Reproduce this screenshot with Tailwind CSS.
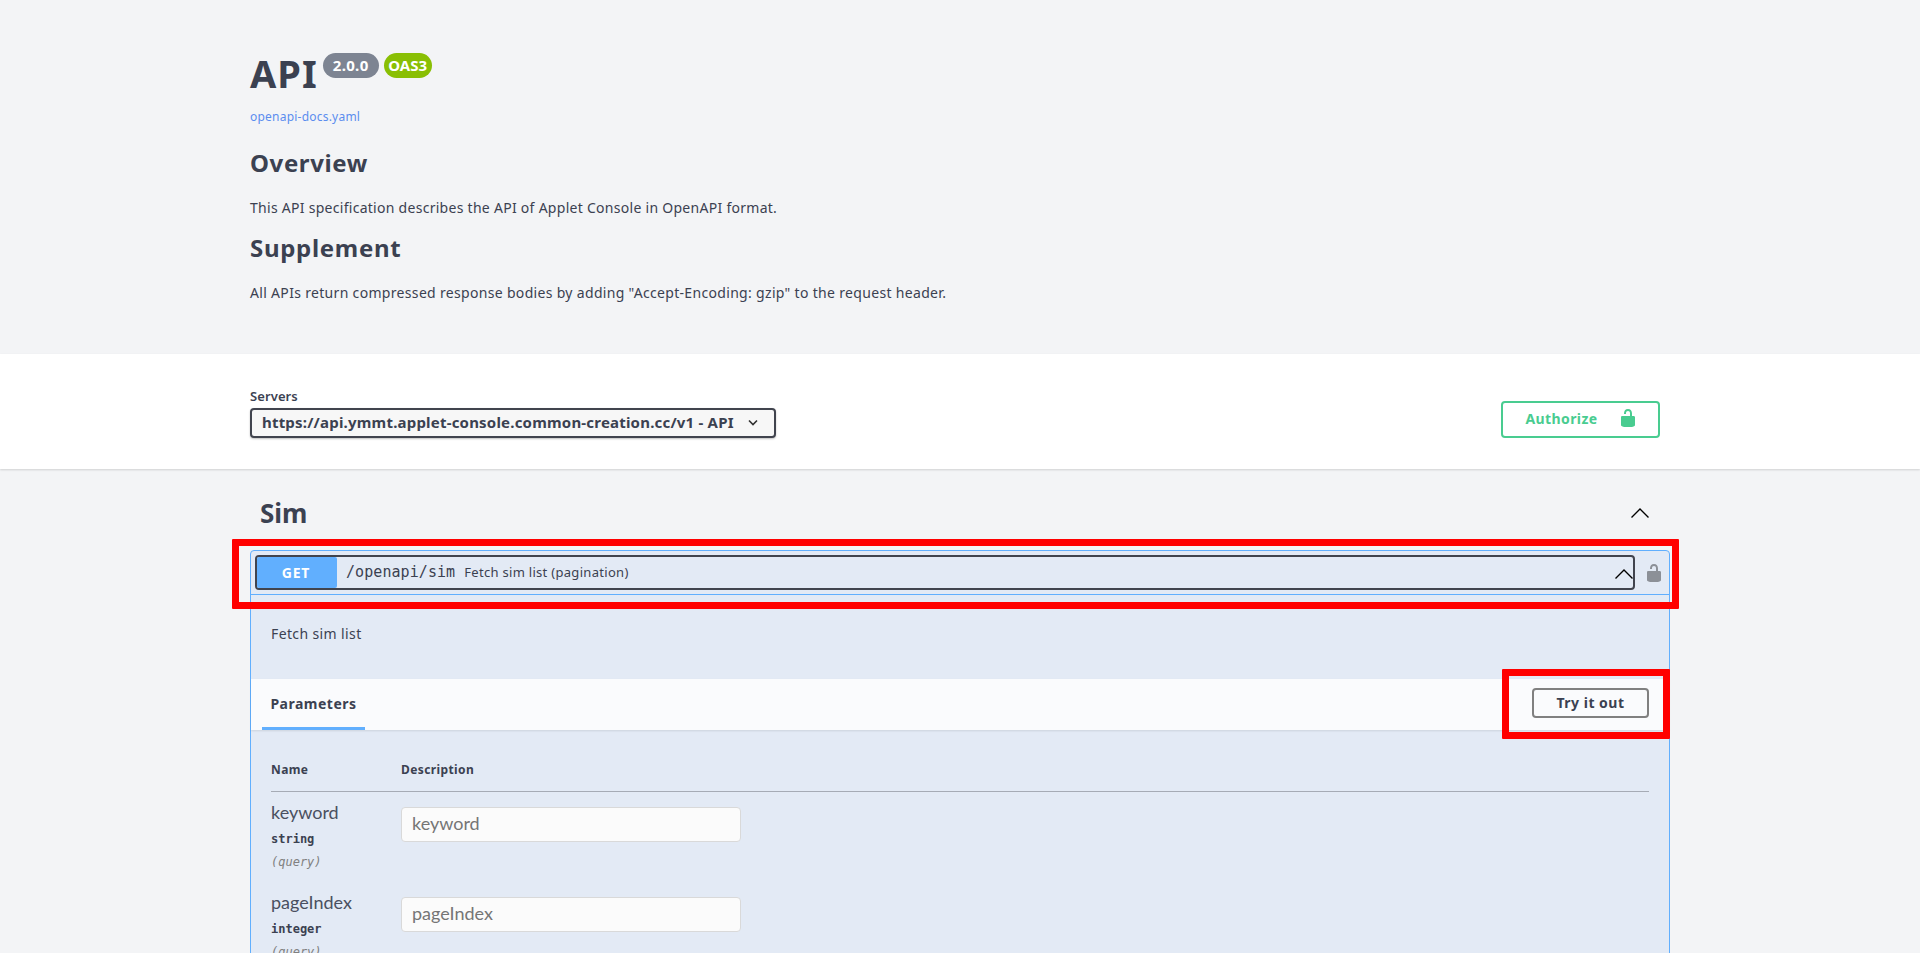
<!DOCTYPE html>
<html><head><meta charset="utf-8"><script src="https://cdn.jsdelivr.net/npm/@tailwindcss/browser@4"></script></head>
<body class="m-0 h-[953px] overflow-hidden bg-[#f3f4f6] text-[#3b4151] font-['Noto_Sans','Open_Sans',sans-serif]">
<div class="relative h-[953px] overflow-hidden">
 <section class="mx-[250px] pt-[48px] h-[354px]">
  <div class="flex items-start h-[54px]">
   <h1 class="text-[38px] font-bold leading-[54px] mt-[-2px] tracking-[1px]">API</h1>
   <span class="ml-[5px] mt-[5px] h-[25px] w-[56px] rounded-[13px] bg-[#7d8492] text-white text-[15px] font-bold flex items-center justify-center tracking-[0.3px]">2.0.0</span>
   <span class="ml-[5px] mt-[5px] h-[25px] w-[48px] rounded-[13px] bg-[#89bf04] text-white text-[15px] font-bold flex items-center justify-center">OAS3</span>
  </div>
  <a class="block mt-[6px] text-[12px] leading-[18px] text-[#5b8def] tracking-[0.22px]">openapi-docs.yaml</a>
  <h2 class="mt-[19px] text-[24px] font-bold leading-[36px] tracking-[0.6px]">Overview</h2>
  <p class="mt-[17px] text-[14px] leading-[20px] tracking-[0.28px]">This API specification describes the API of Applet Console in OpenAPI format.</p>
  <h2 class="mt-[12px] text-[24px] font-bold leading-[36px] tracking-[0.7px]">Supplement</h2>
  <p class="mt-[17px] text-[14px] leading-[20px] tracking-[0.32px]">All APIs return compressed response bodies by adding "Accept-Encoding: gzip" to the request header.</p>
 </section>
 <section class="h-[115px] bg-white shadow-[0_1px_2px_0_rgba(0,0,0,0.15)] px-[250px] pt-[34px] flex justify-between">
  <div>
   <div class="text-[13px] font-semibold leading-[17px] mb-[3px] tracking-[0.1px]">Servers</div>
   <div class="w-[526px] h-[30px] rounded-[4px] border-2 border-[#41444e] bg-[#f7f7f7] shadow-[0_1px_2px_0_rgba(0,0,0,0.25)] flex items-center justify-between pl-[10px] pr-[16px] text-[15px] font-bold tracking-[0.2px] pb-[1px]">
    <span class="whitespace-nowrap">https://api.ymmt.applet-console.common-creation.cc/v1 - API</span>
    <svg width="10" height="7" viewBox="0 0 10 7" fill="none" stroke="#303030" stroke-width="1.6"><path d="M1 1.5 5 5.5l4-4"/></svg>
   </div>
  </div>
  <div class="mr-[10px] mt-[13px] w-[159px] h-[37px] rounded-[4px] border-2 border-[#49cc90] flex items-center justify-center gap-[20px] pl-[2px] text-[#49cc90] text-[14px] font-bold bg-white tracking-[0.4px] pb-[3px]">
   <span>Authorize</span>
   <svg width="20" height="20" viewBox="0 0 20 20" fill="#49cc90"><path d="M15.8 8H14V5.6C14 2.703 12.665 1 10 1 7.334 1 6 2.703 6 5.6V6h2v-.801C8 3.754 8.797 3 10 3c1.203 0 2 .754 2 2.199V8H4c-.553 0-1 .646-1 1.199V17c0 .549.428 1.139.951 1.307l1.197.387C5.672 18.861 6.55 19 7.1 19h5.8c.549 0 1.428-.139 1.951-.307l1.196-.387c.524-.167.953-.757.953-1.306V9.199C17 8.646 16.352 8 15.8 8z"/></svg>
  </div>
 </section>
 <section class="mx-[250px] w-[1420px]">
  <div class="h-[81px] flex items-center justify-between pl-[10px] pr-[20px] pt-[8px]">
   <h3 class="text-[26px] font-bold">Sim</h3>
   <svg class="mt-[-2px]" width="20" height="20" viewBox="0 0 20 20" fill="none" stroke="#000" stroke-width="1.4"><path d="M1.5 14.5 10 6l8.5 8.5"/></svg>
  </div>
  <div class="rounded-t-[4px] border border-[#61affe] bg-[#e3eaf5]">
   <div class="h-[44px] flex items-center border-b border-[#61affe] pl-[4px]">
    <div class="w-[1380px] h-[35px] rounded-[4px] border-2 border-[#41444e] flex items-center">
     <span class="w-[80px] h-[31px] rounded-[2px] bg-[#61affe] text-white text-[14px] font-bold flex items-center justify-center shrink-0 tracking-[0.8px] pr-[2px] pb-[1px]">GET</span>
     <span class="ml-[9px] text-[15px] font-['DejaVu_Sans_Mono','Liberation_Mono',monospace] tracking-[0.07px]">/openapi/sim</span>
     <span class="ml-[9px] text-[13px] tracking-[0.3px]">Fetch sim list (pagination)</span>
     <svg class="ml-auto mr-[-1px] mt-[2px]" width="20" height="20" viewBox="0 0 20 20" fill="none" stroke="#000" stroke-width="1.4"><path d="M1.5 14.5 10 6l8.5 8.5"/></svg>
    </div>
    <svg class="ml-[9px]" width="20" height="20" viewBox="0 0 20 20" fill="#8c9097"><path d="M15.8 8H14V5.6C14 2.703 12.665 1 10 1 7.334 1 6 2.703 6 5.6V6h2v-.801C8 3.754 8.797 3 10 3c1.203 0 2 .754 2 2.199V8H4c-.553 0-1 .646-1 1.199V17c0 .549.428 1.139.951 1.307l1.197.387C5.672 18.861 6.55 19 7.1 19h5.8c.549 0 1.428-.139 1.951-.307l1.196-.387c.524-.167.953-.757.953-1.306V9.199C17 8.646 16.352 8 15.8 8z"/></svg>
   </div>
   <div class="h-[84px] pl-[20px] pt-[29px] text-[14px] leading-[20px] tracking-[0.38px]">Fetch sim list</div>
   <div class="h-[51px] bg-[#fafbfd] shadow-[0_1px_2px_rgba(0,0,0,0.1)] flex items-center justify-between pl-[11px] pr-[20px]">
    <div class="h-full w-[103px] border-b-[3px] border-[#61affe] flex items-center justify-center text-[14px] font-bold pt-[1px] tracking-[0.5px]">Parameters</div>
    <div class="w-[117px] h-[30px] rounded-[4px] border-2 border-[#808080] flex items-center justify-center text-[14px] font-bold mb-[4px] tracking-[0.5px]">Try it out</div>
   </div>
   <div class="px-[20px] pt-[31px]">
    <div class="flex h-[31px] border-b border-[#a6abb5] text-[12px] font-bold leading-[18px] tracking-[0.4px]">
     <div class="w-[130px]">Name</div><div>Description</div>
    </div>
    <div class="flex h-[90px] pt-[10px]">
     <div class="w-[130px]">
      <div class="text-[18px] leading-[20px] text-[#4a5060] font-['Lato',sans-serif]">keyword</div>
      <div class="mt-[9px] text-[12px] leading-[16px] font-bold font-['DejaVu_Sans_Mono',monospace]">string</div>
      <div class="mt-[7px] text-[12px] leading-[16px] italic text-[#808080] font-['DejaVu_Sans_Mono',monospace]">(query)</div>
     </div>
     <div class="mt-[5px] w-[340px] h-[35px] rounded-[4px] border border-[#d9d9d9] bg-[#fbfbfb] text-[18px] text-[#757575] pl-[10px] leading-[31px] font-['Lato',sans-serif]">keyword</div>
    </div>
    <div class="flex pt-[10px]">
     <div class="w-[130px]">
      <div class="text-[18px] leading-[20px] text-[#4a5060] font-['Lato',sans-serif]">pageIndex</div>
      <div class="mt-[9px] text-[12px] leading-[16px] font-bold font-['DejaVu_Sans_Mono',monospace]">integer</div>
      <div class="mt-[7px] text-[12px] leading-[16px] italic text-[#808080] font-['DejaVu_Sans_Mono',monospace]">(query)</div>
     </div>
     <div class="mt-[5px] w-[340px] h-[35px] rounded-[4px] border border-[#d9d9d9] bg-[#fbfbfb] text-[18px] text-[#757575] pl-[10px] leading-[31px] font-['Lato',sans-serif]">pageIndex</div>
    </div>
   </div>
  </div>
 </section>
 <div class="absolute left-[232px] top-[539px] w-[1447px] h-[70px] border-[7px] border-[#ff0000] rounded-[1px]"></div>
 <div class="absolute left-[1502px] top-[669px] w-[168px] h-[70px] border-[7px] border-[#ff0000] rounded-[1px]"></div>
</div>
</body></html>
